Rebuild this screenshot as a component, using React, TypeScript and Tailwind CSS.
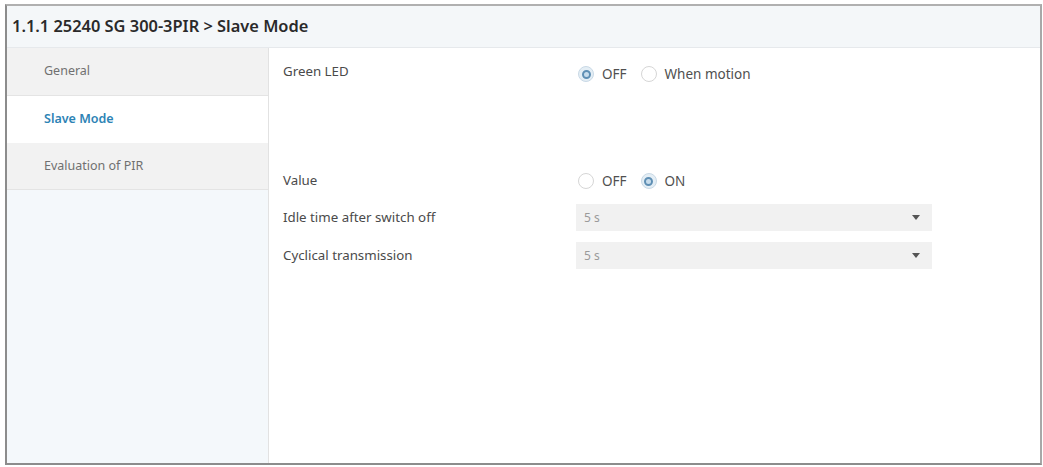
import React from "react";

function Radio({ checked }: { checked: boolean }) {
  return checked ? (
    <span className="flex h-[16px] w-[16px] items-center justify-center rounded-full border border-[#c9d9e6] bg-[#e4eef5]">
      <span className="h-[9px] w-[9px] rounded-full border-[2px] border-[#5f8fb4] bg-[#c7dcec]" />
    </span>
  ) : (
    <span className="h-[16px] w-[16px] rounded-full border border-[#d6d6d6] bg-white" />
  );
}

function Option({ checked, label }: { checked: boolean; label: string }) {
  return (
    <span className="flex items-center gap-[8px]">
      <Radio checked={checked} />
      <span className="text-[13.5px] text-[#505050]">{label}</span>
    </span>
  );
}

function Select({ value }: { value: string }) {
  return (
    <div className="flex h-[27px] w-[356px] items-center justify-between bg-[#f1f1f1] pl-[8px] pr-[12px]">
      <span className="text-[12px] text-[#9a9a9a]">{value}</span>
      <svg width="8" height="5" viewBox="0 0 8 5">
        <path d="M0 0 L8 0 L4 5 Z" fill="#555" />
      </svg>
    </div>
  );
}

export default function App() {
  return (
    <div
      className="h-[467px] w-[1043px] bg-white pl-[5px] pt-[4px]"
      style={{ fontFamily: '"Noto Sans", "Open Sans", sans-serif' }}
    >
      <div className="flex h-[461px] w-[1037px] flex-col border-2 border-t-[#b0b0b0] border-l-[#8c8c8c] border-r-[#a8a8a8] border-b-[#8c8c8c]">
        <div className="flex h-[42px] items-center border-b border-[#e6e9ec] bg-[#f4f7f9] pl-[5px]">
          <span className="text-[16.4px] font-semibold text-[#2a2a2a]">
            1.1.1 25240 SG 300-3PIR &gt; Slave Mode
          </span>
        </div>
        <div className="flex flex-1">
          <div className="flex w-[262px] flex-col border-r border-[#e2e2e2] bg-[#f4f8fb]">
            <div className="flex h-[48px] items-center border-b border-[#e4e4e4] bg-[#f2f2f2] pl-[37px] text-[12.5px] text-[#707070]">
              General
            </div>
            <div className="flex h-[47px] items-center bg-white pl-[37px] text-[12.5px] font-semibold text-[#2d83b5]">
              Slave Mode
            </div>
            <div className="flex h-[47px] items-center border-b border-[#e4e4e4] bg-[#f2f2f2] pl-[37px] text-[12.5px] text-[#707070]">
              Evaluation of PIR
            </div>
          </div>
          <div className="flex flex-1 flex-col bg-white pl-[14px] text-[13.3px] text-[#4a4a4a]">
            <div className="flex h-[48px] items-center">
              <span className="w-[293px]">Green LED</span>
              <span className="flex items-center gap-[14px] pl-[2px] pt-[4px]">
                <Option checked label="OFF" />
                <Option checked={false} label="When motion" />
              </span>
            </div>
            <div className="mt-[66px] flex h-[38px] items-center">
              <span className="w-[293px]">Value</span>
              <span className="flex items-center gap-[14px] pl-[2px]">
                <Option checked={false} label="OFF" />
                <Option checked label="ON" />
              </span>
            </div>
            <div className="mt-[4px] flex items-center">
              <span className="w-[293px]">Idle time after switch off</span>
              <Select value="5 s" />
            </div>
            <div className="mt-[11px] flex items-center">
              <span className="w-[293px]">Cyclical transmission</span>
              <Select value="5 s" />
            </div>
          </div>
        </div>
      </div>
    </div>
  );
}
